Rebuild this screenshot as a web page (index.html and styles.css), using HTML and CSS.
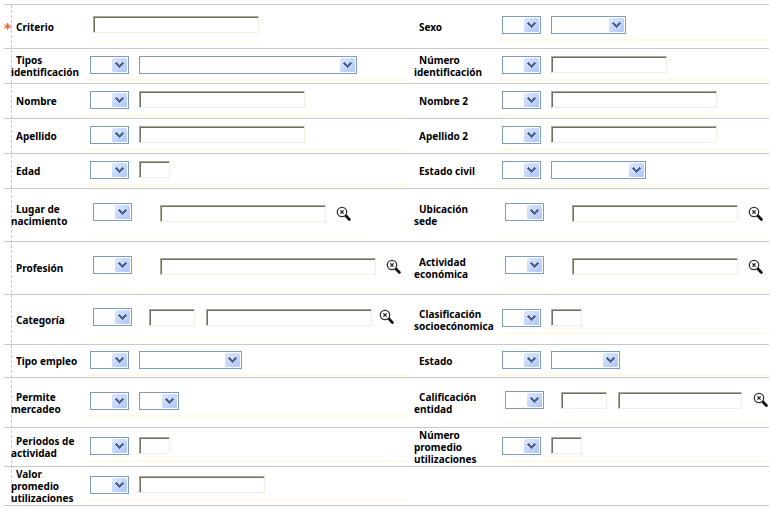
FILE: index.html
```html
<!DOCTYPE html>
<html lang="es">
<head>
<meta charset="utf-8">
<title>Criterios de búsqueda</title>
<link rel="stylesheet" href="styles.css">
</head>
<body>
<svg class="sprite" aria-hidden="true">
  <symbol id="lens" viewBox="0 0 16 16">
    <path d="M9.6 9.6 13.4 13.4" stroke="#111" stroke-width="2.8" stroke-linecap="round"/>
    <circle cx="6" cy="6" r="4.7" fill="#fff" stroke="#333" stroke-width="1.3"/>
    <path d="M4.4 4.4 7.6 7.6M7.6 4.4 4.4 7.6" stroke="#222" stroke-width="1.3"/>
  </symbol>
</svg>
<form class="filters">
  <div class="row row-first">
    <span class="required">*</span>
    <label class="caption" for="criterio">Criterio</label>
    <div class="split"><div class="part part-op"><input id="criterio" type="text" class="w-text"></div></div>
    <label class="caption" for="sexo">Sexo</label>
    <div class="controls"><select class="w-op" aria-label="Operador de sexo"></select><select id="sexo" class="w-75"></select></div>
  </div>
  <div class="row">
    <span></span>
    <label class="caption" for="tipos">Tipos<br>identificación</label>
    <div class="controls"><select class="w-op" aria-label="Operador de tipos"></select><select id="tipos" class="w-218"></select></div>
    <label class="caption" for="numero">Número<br>identificación</label>
    <div class="controls"><select class="w-op" aria-label="Operador de número"></select><input id="numero" type="text" class="w-116"></div>
  </div>
  <div class="row">
    <span></span>
    <label class="caption" for="nombre">Nombre</label>
    <div class="controls"><select class="w-op" aria-label="Operador de nombre"></select><input id="nombre" type="text" class="w-text"></div>
    <label class="caption" for="nombre2">Nombre 2</label>
    <div class="controls"><select class="w-op" aria-label="Operador de nombre 2"></select><input id="nombre2" type="text" class="w-text"></div>
  </div>
  <div class="row">
    <span></span>
    <label class="caption" for="apellido">Apellido</label>
    <div class="controls"><select class="w-op" aria-label="Operador de apellido"></select><input id="apellido" type="text" class="w-text"></div>
    <label class="caption" for="apellido2">Apellido 2</label>
    <div class="controls"><select class="w-op" aria-label="Operador de apellido 2"></select><input id="apellido2" type="text" class="w-text"></div>
  </div>
  <div class="row">
    <span></span>
    <label class="caption" for="edad">Edad</label>
    <div class="controls"><select class="w-op" aria-label="Operador de edad"></select><input id="edad" type="text" class="w-num"></div>
    <label class="caption" for="civil">Estado civil</label>
    <div class="controls"><select class="w-op" aria-label="Operador de estado civil"></select><select id="civil" class="w-95"></select></div>
  </div>
  <div class="row row-lookup">
    <span></span>
    <label class="caption" for="lugar">Lugar de<br>nacimiento</label>
    <div class="split">
      <div class="part part-op"><select class="w-op" aria-label="Operador de lugar"></select></div>
      <div class="part part-search part-wide-end"><input id="lugar" type="text" class="w-text"><button type="button" class="search" aria-label="Buscar lugar"><svg><use href="#lens"/></svg></button></div>
    </div>
    <label class="caption" for="sede">Ubicación<br>sede</label>
    <div class="split">
      <div class="part part-op"><select class="w-op" aria-label="Operador de sede"></select></div>
      <div class="part part-search part-fill"><input id="sede" type="text" class="w-text"><button type="button" class="search" aria-label="Buscar sede"><svg><use href="#lens"/></svg></button></div>
    </div>
  </div>
  <div class="row row-lookup">
    <span></span>
    <label class="caption" for="profesion">Profesión</label>
    <div class="split">
      <div class="part part-op"><select class="w-op" aria-label="Operador de profesión"></select></div>
      <div class="part part-search"><input id="profesion" type="text" class="w-216"><button type="button" class="search" aria-label="Buscar profesión"><svg><use href="#lens"/></svg></button></div>
    </div>
    <label class="caption" for="actividad">Actividad<br>económica</label>
    <div class="split">
      <div class="part part-op"><select class="w-op" aria-label="Operador de actividad"></select></div>
      <div class="part part-search part-fill"><input id="actividad" type="text" class="w-text"><button type="button" class="search" aria-label="Buscar actividad"><svg><use href="#lens"/></svg></button></div>
    </div>
  </div>
  <div class="row row-tall">
    <span></span>
    <label class="caption" for="categoria">Categoría</label>
    <div class="split">
      <div class="part part-op"><select class="w-op" aria-label="Operador de categoría"></select></div>
      <div class="part part-code"><input id="categoria" type="text" class="w-code"><input type="text" class="w-text" aria-label="Descripción de categoría"><button type="button" class="search" aria-label="Buscar categoría"><svg><use href="#lens"/></svg></button></div>
    </div>
    <label class="caption" for="clasificacion">Clasificación<br>socioecónomica</label>
    <div class="controls"><select class="w-op" aria-label="Operador de clasificación"></select><input id="clasificacion" type="text" class="w-num"></div>
  </div>
  <div class="row row-short">
    <span></span>
    <label class="caption" for="empleo">Tipo empleo</label>
    <div class="controls"><select class="w-op" aria-label="Operador de empleo"></select><select id="empleo" class="w-103"></select></div>
    <label class="caption" for="estado">Estado</label>
    <div class="controls"><select class="w-op" aria-label="Operador de estado"></select><select id="estado" class="w-69"></select></div>
  </div>
  <div class="row row-tall">
    <span></span>
    <label class="caption" for="mercadeo">Permite<br>mercadeo</label>
    <div class="controls"><select class="w-op" aria-label="Operador de mercadeo"></select><select id="mercadeo" class="w-40"></select></div>
    <label class="caption" for="calificacion">Calificación<br>entidad</label>
    <div class="split">
      <div class="part part-op"><select class="w-op" aria-label="Operador de calificación"></select></div>
      <div class="part part-code part-fill"><input id="calificacion" type="text" class="w-code"><input type="text" class="w-124" aria-label="Descripción de calificación"><button type="button" class="search" aria-label="Buscar calificación"><svg><use href="#lens"/></svg></button></div>
    </div>
  </div>
  <div class="row row-medium">
    <span></span>
    <label class="caption" for="periodos">Periodos de<br>actividad</label>
    <div class="controls"><select class="w-op" aria-label="Operador de periodos"></select><input id="periodos" type="text" class="w-num"></div>
    <label class="caption" for="utilizaciones">Número<br>promedio<br>utilizaciones</label>
    <div class="controls"><select class="w-op" aria-label="Operador de utilizaciones"></select><input id="utilizaciones" type="text" class="w-num"></div>
  </div>
  <div class="row row-medium">
    <span></span>
    <label class="caption" for="valor">Valor<br>promedio<br>utilizaciones</label>
    <div class="controls"><select class="w-op" aria-label="Operador de valor"></select><input id="valor" type="text" class="w-126"></div>
  </div>
</form>
</body>
</html>
```
FILE: styles.css
```css
* {
  box-sizing: border-box;
}

body {
  margin: 4px 3px 0 4px;
  background: #fff;
  color: #000;
  font: bold 10px/12px "Noto Sans", Verdana, sans-serif;
}

.sprite {
  display: none;
}

.filters {
  border-top: 1px solid #c8c8c8;
  background: repeating-linear-gradient(#c8c8c8 0 3px, transparent 3px 5px) 7px 0 / 1px 100% no-repeat;
}

.row {
  display: grid;
  grid-template-columns: 7px 74px 329fr 83px 272fr;
  align-items: center;
  min-height: 35px;
  border-bottom: 1px solid #c8c8c8;
}

.row-first { min-height: 44px; }
.row-lookup { min-height: 53px; }
.row-tall { min-height: 50px; }
.row-short { min-height: 33px; }
.row-medium { min-height: 39px; }

.required {
  color: #ff5a26;
  font: bold 14px/12px "DejaVu Sans", sans-serif;
  padding-top: 2px;
}

.caption {
  text-indent: 5px;
  white-space: nowrap;
}

.controls {
  display: flex;
  gap: 10px;
  align-items: flex-start;
  padding: 6px 5px 5px;
  margin: 0 6px 2px 0;
  border-bottom: 2px solid #fffae4;
}

.controls:nth-child(5) {
  margin-right: 0;
}

.row-short .controls {
  margin-bottom: 1px;
}

.split {
  display: flex;
  gap: 4px;
  align-self: stretch;
  margin: 0 0 4px 3px;
}

.part {
  display: flex;
  align-items: center;
  border-bottom: 1px solid #fffae4;
}

.part-op { padding: 0 5px; }

.row-lookup .part-op { padding-bottom: 1px; }

.part-search {
  gap: 10px;
  padding: 2px 2px 0 19px;
}

.part-wide-end { padding-right: 14px; }

.part-code {
  gap: 11px;
  padding-left: 8px;
}

.part-code .search { margin-left: -4px; }

.part-fill {
  flex: 1;
}

.part-fill .search { margin-left: 0; }

input,
select {
  flex: none;
  margin: 0;
  padding: 0 2px;
  background-color: #fff;
  border-radius: 0;
  font: 11px "Noto Sans", sans-serif;
}

input {
  height: 17px;
  border: 1px solid;
  border-color: #aca899 #f1efe2 #f1efe2 #aca899;
  box-shadow: inset 1px 1px #716f64;
}

select {
  appearance: none;
  height: 18px;
  border: 1px solid #7f9db9;
  background: url("data:image/svg+xml,%3Csvg xmlns='http://www.w3.org/2000/svg' width='15' height='14'%3E%3Cdefs%3E%3ClinearGradient id='g' x2='1' y2='1'%3E%3Cstop stop-color='%23dfe8ff'/%3E%3Cstop offset='1' stop-color='%23adc5fa'/%3E%3C/linearGradient%3E%3C/defs%3E%3Crect width='15' height='14' rx='1.5' fill='url(%23g)'/%3E%3Cpath fill='%234d6185' d='M4 4h1v1h1v1h1v1h1v-1h1v-1h1v-1h1v1h1v1h-1v1h-1v1h-1v1h-1v1h-1v-1h-1v-1h-1v-1h-1v-1h-1v-1h1z'/%3E%3C/svg%3E") no-repeat right 1px top 1px;
}

.search {
  flex: none;
  width: 16px;
  height: 16px;
  padding: 0;
  border: 0;
  background: none;
}

.search svg {
  display: block;
  width: 16px;
  height: 16px;
}

.w-num { width: 31px; }
.w-op { width: 39px; }
.w-40 { width: 40px; }
.w-code { width: 46px; }
.w-69 { width: 69px; }
.w-75 { width: 75px; }
.w-95 { width: 95px; }
.w-103 { width: 103px; }
.w-116 { width: 116px; }
.w-124 { width: 124px; }
.w-126 { width: 126px; }
.w-text { width: 166px; }
.w-216 { width: 216px; }
.w-218 { width: 218px; }
```
